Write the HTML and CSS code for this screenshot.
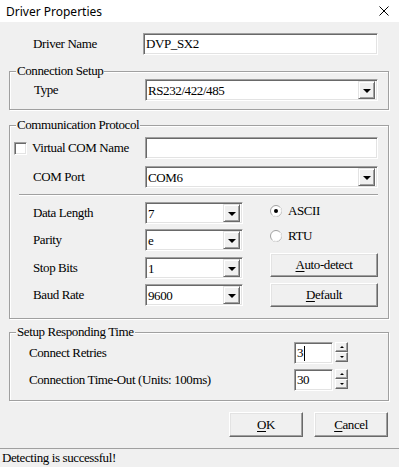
FILE: index.html
```html
<!DOCTYPE html>
<html>
<head>
<meta charset="utf-8">
<link rel="stylesheet" href="styles.css">
</head>
<body>
<div class="titlebar">
  <span class="title">Driver Properties</span>
  <svg class="close" width="10" height="10" viewBox="0 0 10 10"><path d="M0.5 0.5 L9.5 9.5 M9.5 0.5 L0.5 9.5" stroke="#000" stroke-width="1" fill="none"/></svg>
</div>
<div class="main">
  <div class="row row-name">
    <span class="lbl lbl-name">Driver Name</span>
    <div class="sunken field-wide">DVP_SX2</div>
  </div>

  <fieldset class="group g1">
    <legend>Connection Setup</legend>
    <div class="row indent-24">
      <span class="lbl lbl-111">Type</span>
      <div class="sunken combo field-233"><span class="val">RS232/422/485</span><span class="drop"><i class="arrow"></i></span></div>
    </div>
  </fieldset>

  <fieldset class="group g2">
    <legend>Communication Protocol</legend>
    <div class="row indent-4">
      <span class="check"></span>
      <span class="lbl lbl-113">Virtual COM Name</span>
      <div class="sunken field-233"></div>
    </div>
    <div class="row indent-23 row-com">
      <span class="lbl lbl-112">COM Port</span>
      <div class="sunken combo field-233"><span class="val">COM6</span><span class="drop"><i class="arrow"></i></span></div>
    </div>
    <div class="separator"></div>
    <div class="lower">
      <div class="leftcol">
        <div class="row">
          <span class="lbl lbl-112">Data Length</span>
          <div class="sunken combo field-98"><span class="val">7</span><span class="drop"><i class="arrow"></i></span></div>
        </div>
        <div class="row gap5">
          <span class="lbl lbl-112">Parity</span>
          <div class="sunken combo field-98"><span class="val">e</span><span class="drop"><i class="arrow"></i></span></div>
        </div>
        <div class="row gap6">
          <span class="lbl lbl-112">Stop Bits</span>
          <div class="sunken combo field-98"><span class="val">1</span><span class="drop"><i class="arrow"></i></span></div>
        </div>
        <div class="row gap5">
          <span class="lbl lbl-112">Baud Rate</span>
          <div class="sunken combo field-98"><span class="val">9600</span><span class="drop"><i class="arrow"></i></span></div>
        </div>
      </div>
      <div class="rightcol">
        <div class="radio-row">
          <svg class="radio" width="12" height="12" viewBox="0 0 12 12">
            <circle cx="6" cy="6" r="5.5" fill="#fff" stroke="#a0a0a0"/>
            <path d="M2.2 9.8 A5.4 5.4 0 0 0 9.8 2.2" stroke="#fff" fill="none"/>
            <circle cx="6" cy="6" r="2" fill="#000"/>
          </svg>
          <span>ASCII</span>
        </div>
        <div class="radio-row rtu">
          <svg class="radio" width="12" height="12" viewBox="0 0 12 12">
            <circle cx="6" cy="6" r="5.5" fill="#fff" stroke="#a0a0a0"/>
            <path d="M2.2 9.8 A5.4 5.4 0 0 0 9.8 2.2" stroke="#fff" fill="none"/>
          </svg>
          <span>RTU</span>
        </div>
        <div class="btn btn-auto"><span><u>A</u>uto-detect</span></div>
        <div class="btn btn-default"><span><u>D</u>efault</span></div>
      </div>
    </div>
  </fieldset>

  <fieldset class="group g3">
    <legend>Setup Responding Time</legend>
    <div class="row indent-19 spin-row">
      <span class="lbl lbl-265">Connect Retries</span>
      <div class="sunken field-39">3<span class="caret"></span></div>
      <div class="spin"><span class="spin-btn"><i class="up"></i></span><span class="spin-btn"><i class="down"></i></span></div>
    </div>
    <div class="row indent-19 spin-row gap5">
      <span class="lbl lbl-265">Connection Time-Out (Units: 100ms)</span>
      <div class="sunken field-39">30</div>
      <div class="spin"><span class="spin-btn"><i class="up"></i></span><span class="spin-btn"><i class="down"></i></span></div>
    </div>
  </fieldset>

  <div class="actions">
    <div class="btn btn-74"><span><u>O</u>K</span></div>
    <div class="btn btn-74"><span><u>C</u>ancel</span></div>
  </div>
</div>
<div class="status">Detecting is successful!</div>
</body>
</html>
```

FILE: styles.css
```css
* { box-sizing: border-box; margin: 0; padding: 0; }
html, body { width: 399px; height: 467px; overflow: hidden; }
body {
  background: #f0f0f0;
  font-family: "Liberation Serif", "Times New Roman", serif;
  font-size: 13px;
  letter-spacing: -0.4px;
  color: #000;
  display: flex;
  flex-direction: column;
}
.titlebar {
  height: 22px;
  flex: none;
  background: #fff;
  display: flex;
  align-items: center;
  justify-content: space-between;
  padding: 0 10px 0 6px;
  font-family: "Noto Sans", "Open Sans", sans-serif;
  font-size: 12px;
  letter-spacing: 0;
}
.close { display: block; width: 10px; height: 10px; }
.main { flex: 1; padding: 0 10px 0 9px; display: flex; flex-direction: column; }
.row { display: flex; align-items: center; }
.lbl { flex: none; white-space: nowrap; }
.row-name { margin-top: 11px; padding-left: 24px; }
.lbl-name { width: 110px; }
.lbl-111 { width: 111px; }
.lbl-112 { width: 112px; }
.lbl-113 { width: 113px; }
.lbl-265 { width: 265px; }
.indent-24 { padding-left: 24px; }
.indent-23 { padding-left: 23px; }
.indent-19 { padding-left: 19px; }
.indent-4 { padding-left: 4px; }

.sunken {
  flex: none;
  height: 22px;
  background: #fff;
  border: 1px solid;
  border-color: #a0a0a0 #fff #fff #a0a0a0;
  box-shadow: inset 1px 1px 0 #696969, inset -1px -1px 0 #e3e3e3;
  display: flex;
  align-items: center;
  padding-left: 2px;
  white-space: nowrap;
}
.field-wide { width: 235px; }
.field-233 { width: 233px; }
.field-98 { width: 98px; }
.field-39 { width: 39px; }
.combo { padding-right: 2px; }
.combo .val { flex: 1; padding-top: 1px; }
.drop {
  width: 17px;
  height: 18px;
  background: #f0f0f0;
  border: 1px solid;
  border-color: #e3e3e3 #696969 #696969 #e3e3e3;
  box-shadow: inset 1px 1px 0 #fff, inset -1px -1px 0 #a0a0a0;
  display: flex;
  align-items: center;
  justify-content: center;
}
.arrow {
  display: block;
  width: 0; height: 0;
  border-left: 4px solid transparent;
  border-right: 4px solid transparent;
  border-top: 4px solid #000;
  margin-top: 1px;
}

.group {
  border: 1px solid #a0a0a0;
  box-shadow: inset 1px 1px 0 #fff, 1px 1px 0 #fff;
  min-width: 0;
  padding: 0 10px 0 0;
}
.group legend {
  margin-left: 6px;
  padding: 0 1px;
  line-height: 14px;
  height: 14px;
  background: #f0f0f0;
}
.g1 { margin-top: 9px; padding-top: 1px; padding-bottom: 8px; }
.g2 { margin-top: 8px; padding-top: 5px; padding-bottom: 11px; }
.g3 { margin-top: 6px; padding-top: 3px; padding-bottom: 9px; }

.check {
  flex: none;
  width: 13px; height: 13px;
  margin-right: 5px;
  background: #fff;
  border: 1px solid;
  border-color: #a0a0a0 #fff #fff #a0a0a0;
  box-shadow: inset 1px 1px 0 #696969, inset -1px -1px 0 #e3e3e3;
}
.row-com { margin-top: 7px; }
.separator {
  margin: 6px 0 0 9px;
  height: 2px;
  border-top: 1px solid #a0a0a0;
  border-bottom: 1px solid #fff;
}
.lower { display: flex; margin-top: 6px; padding-left: 23px; }
.leftcol { display: flex; flex-direction: column; }
.gap5 { margin-top: 5px; }
.gap6 { margin-top: 6px; }
.rightcol { display: flex; flex-direction: column; margin-left: 27px; width: 108px; }
.radio-row { height: 18px; display: flex; align-items: center; }
.radio { flex: none; display: block; margin-right: 6px; }
.rtu { margin-top: 7px; }

.btn {
  height: 24px;
  background: #f0f0f0;
  border: 1px solid;
  border-color: #fff #696969 #696969 #fff;
  box-shadow: inset -1px -1px 0 #a0a0a0, inset 1px 1px 0 #e3e3e3;
  display: flex;
  align-items: center;
  justify-content: center;
  white-space: nowrap;
}
.btn u { text-decoration-thickness: 1px; text-underline-offset: 2px; }
.btn-auto { margin-top: 8px; }
.btn-default { margin-top: 6px; }

.spin-row { align-items: flex-start; }
.spin-row .lbl { align-self: center; }
.caret { display: inline-block; width: 1px; height: 15px; background: #000; margin-left: 1px; }
.spin { display: flex; flex-direction: column; margin-left: 2px; }
.spin-btn {
  width: 13px; height: 10px;
  background: #f0f0f0;
  border: 1px solid;
  border-color: #fff #696969 #696969 #fff;
  box-shadow: inset -1px -1px 0 #a0a0a0;
  display: flex; align-items: center; justify-content: center;
}
.spin-btn .up, .spin-btn .down {
  display: block; width: 0; height: 0;
  border-left: 2px solid transparent;
  border-right: 2px solid transparent;
}
.spin-btn .up { border-bottom: 2px solid #000; }
.spin-btn .down { border-top: 2px solid #000; }

.actions { display: flex; justify-content: flex-end; gap: 11px; margin-top: 11px; padding-right: 1px; }
.btn-74 { width: 74px; height: 25px; }

.status {
  flex: none;
  height: 19px;
  border-top: 1px solid #a0a0a0;
  padding-left: 2px;
  line-height: 18px;
}
```
